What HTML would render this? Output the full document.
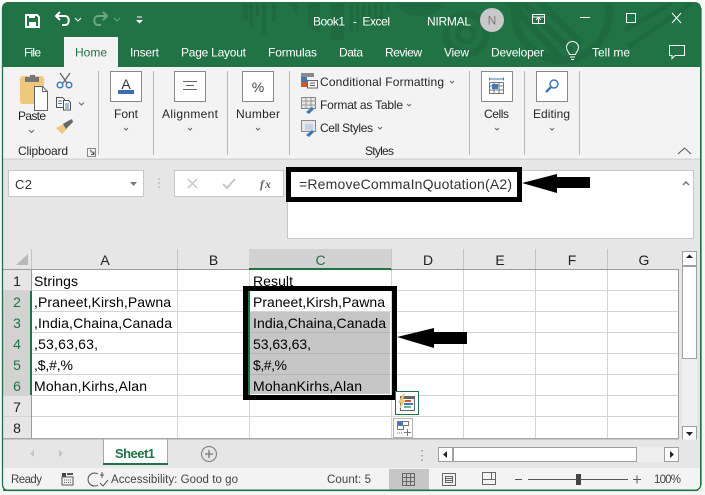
<!DOCTYPE html>
<html><head><meta charset="utf-8"><style>
html,body{margin:0;padding:0;background:#fff;width:705px;height:495px;overflow:hidden}
svg{display:block}
text{font-family:"Liberation Sans",sans-serif;font-size:12px;fill:#262626}
.w text,text.w{fill:#fff}
.c text{font-size:14px;fill:#000}
.h text{font-size:14px;fill:#222;text-anchor:middle}
.hg text,text.hg{fill:#217346}
.g{stroke:#d4d4d4;stroke-width:1;fill:none}
.i{fill:none;stroke:#666;stroke-width:1}
</style></head><body>
<svg width="705" height="495" viewBox="0 0 705 495" xmlns="http://www.w3.org/2000/svg">
<rect width="705" height="495" fill="#f6f6f6"/>
<rect x="0" y="0" width="705" height="2" fill="#fff"/>
<!-- window -->
<rect x="2" y="2" width="699" height="488.500" rx="6" fill="#217346"/>
<rect x="3" y="67" width="697" height="422.500" rx="5" fill="#f3f3f3"/>
<rect x="3" y="67" width="697" height="10" fill="#f3f3f3"/>
<!-- title decoration -->
<clipPath id="tb"><rect x="3" y="3" width="697" height="64"/></clipPath>
<g clip-path="url(#tb)">
<g fill="#1f6a41">
<rect x="243" y="3" width="5" height="17"/><rect x="249" y="3" width="4" height="23"/><rect x="256" y="3" width="3" height="13"/><rect x="262" y="3" width="4" height="32"/><rect x="272" y="3" width="4" height="19"/>
<path d="M290 3h8v13zM308 3h12v30l-12-6zM331 3h13v37h-13z"/>
<path d="M350 3h3v30h-3zM356 3h3v28h-3zM362 3h3v26h-3zM368 3h3v24h-3zM374 3h3v20h-3zM380 3h3v16h-3zM386 3h3v10h-3z"/>
<path d="M398 3h44q-4 13-22 13t-22-13z"/>
</g>
<g fill="none" stroke="#1f6a41">
<circle cx="466" cy="34" r="20" stroke-width="7"/>
<circle cx="466" cy="34" r="8" stroke-width="5"/>
<circle cx="562" cy="13" r="47" stroke-width="8"/>
<path d="M508 0l52 58M520 0l52 52M538 0l44 44" stroke-width="7"/>
<path d="M628 47l64-44M625 30l47-27" stroke-width="5"/>
</g>
</g>
<!-- QAT -->
<g fill="none" stroke="#fff">
<path d="M26 15h11l2 2v10H26z" stroke-width="2"/>
<rect x="29" y="14" width="6" height="4" fill="#fff" stroke="none"/><rect x="29" y="22" width="7" height="6" fill="#fff" stroke="none"/>
<path d="M56 16h9c5 0 5 9 0 9h-3M60 12l-4 4 4 4" stroke-width="2"/>
<path d="M75 18l3 3 3-3" stroke-width="1"/>
<g opacity=".35"><path d="M107 16h-9c-5 0-5 9 0 9h3M103 12l4 4-4 4" stroke-width="2"/><path d="M114 18l3 3 3-3"/></g>
<path d="M137 17h5" stroke-width="1"/></g>
<path d="M136 20h7l-3.500 3.500z" fill="#fff"/>
<g class="w">
<text x="313" y="25.500" textLength="32">Book1</text>
<text x="353" y="25.500" textLength="37" xml:space="preserve">-  Excel</text>
<text x="427" y="25.500" textLength="44">NIRMAL</text>
<text x="24" y="56.500" textLength="17">File</text>
<text x="130" y="56.500" textLength="29">Insert</text>
<text x="181" y="56.500" textLength="65">Page Layout</text>
<text x="268" y="56.500" textLength="49">Formulas</text>
<text x="339" y="56.500" textLength="24">Data</text>
<text x="385" y="56.500" textLength="37">Review</text>
<text x="444" y="56.500" textLength="25">View</text>
<text x="491" y="56.500" textLength="53">Developer</text>
<text x="592" y="56.500" textLength="38">Tell me</text>
</g>
<circle cx="492" cy="20" r="12" fill="#c9c9c9"/>
<text x="492" y="24.500" text-anchor="middle" style="fill:#7a7a7a">N</text>
<g fill="none" stroke="#fff">
<rect x="532.500" y="14.500" width="12" height="9"/><path d="M532 17h13M538.500 23v-5M536 20l2.500-2.500 2.500 2.500"/>
<path d="M580 17.500h10"/>
<rect x="626.500" y="13.500" width="9" height="9"/>
<path d="M672 13l9 10M681 13l-9 10"/>
<path d="M569.500 54.500c-1-3-3-4-3-7a6 6 0 0 1 12 0c0 3-2 4-3 7zM570 57h5M571 59.500h3" stroke-width="1"/>
<path d="M669.500 45.500h15v10H675l-3 3v-3h-2.500z" stroke-width="1"/>
</g>
<!-- Home tab -->
<rect x="64" y="37" width="54" height="31" fill="#f3f3f3"/>
<text x="75" y="56.500" textLength="32" class="hg">Home</text>
<!-- Ribbon separators -->
<g stroke="#b8b8b8"><path d="M98.500 71v84M153.500 71v84M227.500 71v84M289.500 71v84M469.500 71v84M524.500 71v84M579.500 71v84"/></g>
<rect x="3" y="158.500" width="697" height="1.500" fill="#d6d6d6"/>
<!-- Paste -->
<path d="M20 79q0-3 3-3h18q3 0 3 3v22q0 3-3 3H23q-3 0-3-3z" fill="#f0c87c"/>
<rect x="25" y="77" width="14" height="5" fill="#777"/><rect x="30" y="75" width="5" height="4" fill="#777"/>
<path d="M34.500 86.500h8l5 5v19h-13z" fill="#fff" stroke="#666"/>
<path d="M42.500 86.500v5h5" fill="none" stroke="#666"/>
<g fill="none" stroke="#666" stroke-width="1.300"><path d="M60 73l7 10M70 73l-7 10"/></g>
<circle cx="60" cy="85" r="2.800" fill="none" stroke="#3e7ab5" stroke-width="1.500"/><circle cx="69" cy="85" r="2.800" fill="none" stroke="#3e7ab5" stroke-width="1.500"/>
<path d="M56.500 97.500h6l2 2v8h-8z" fill="#fff" stroke="#555"/><path d="M63.500 100.500h5l2 2v7.500h-7z" fill="#fff" stroke="#555"/>
<path d="M58 101h4M58 103.500h4M65 104h4M65 106h4M65 108h4" stroke="#3e7ab5"/>
<path d="M79 102.500l2.500 2.500 2.500-2.500M29 130l2.500 2.500 2.500-2.500" fill="none" stroke="#666"/>
<path d="M56 128l8-4 3 5-5 5z" fill="#f0c87c"/><path d="M63 124l5-3 4-2 1 3-3 3-4 4z" fill="#666"/>
<text x="18" y="120" textLength="28">Paste</text>
<text x="18" y="155" textLength="50">Clipboard</text>
<path d="M87.500 148.500h8v8h-8z" fill="none" stroke="#888"/><path d="M90 150l4 4M94 151.500v3h-3" fill="none" stroke="#555"/>
<!-- ribbon boxes -->
<g fill="#fff" stroke="#8a8a8a">
<rect x="110.500" y="71.500" width="31" height="30"/><rect x="174.500" y="71.500" width="31" height="30"/><rect x="242.500" y="71.500" width="31" height="30"/><rect x="481.500" y="71.500" width="31" height="30"/><rect x="536.500" y="71.500" width="31" height="30"/>
</g>
<text x="126" y="89" text-anchor="middle" style="font-size:14px;fill:#333">A</text>
<rect x="118" y="90" width="16" height="4" fill="#3c6eaf"/>
<path d="M183 81.500h14M186 85.500h8M183 89.500h14" stroke="#666" fill="none"/>
<text x="258" y="92" text-anchor="middle" style="font-size:14px;fill:#444">%</text>
<g fill="none" stroke="#777"><rect x="489.500" y="82.500" width="14" height="11"/><path d="M494 83v10M499 83v10M489 86h15M489 90h15"/></g>
<path d="M489.500 79h14M489.500 77.500v3M503.500 77.500v3" stroke="#3e7ab5" fill="none"/><rect x="492" y="84" width="6" height="5" fill="#3e7ab5"/>
<circle cx="554" cy="84" r="4" fill="none" stroke="#3e7ab5" stroke-width="1.500"/><path d="M551 87l-5 5" stroke="#3e7ab5" stroke-width="2.500"/>
<text x="114" y="118" textLength="24">Font</text>
<text x="162" y="118" textLength="56">Alignment</text>
<text x="236" y="118" textLength="44">Number</text>
<text x="484" y="118" textLength="25">Cells</text>
<text x="533" y="118" textLength="37">Editing</text>
<g fill="none" stroke="#666"><path d="M124 128l2 2 2-2M188 128l2 2 2-2M256 128l2 2 2-2M495 128l2 2 2-2M550 128l2 2 2-2M450 81l2 2 2-2M407 104l2 2 2-2M378 127l2 2 2-2"/></g>
<!-- styles -->
<rect x="301" y="73" width="13" height="4" fill="#8a8a8a"/><rect x="301" y="77" width="6" height="5" fill="#3e7ab5"/><rect x="301" y="82" width="6" height="5" fill="#d9552c"/>
<rect x="307.500" y="80.500" width="10" height="7.500" fill="#fff" stroke="#666"/><path d="M310 83h5M310 85.500h5" stroke="#555"/>
<g fill="#e6e6e6" stroke="#888"><rect x="301.500" y="97.500" width="14" height="11"/><rect x="301.500" y="120.500" width="14" height="11"/></g>
<path d="M306 98v10M311 98v10M301 101h15M301 105h15" stroke="#999"/>
<rect x="305" y="124" width="8" height="6" fill="#c4d2e4"/>
<path d="M306 112l6-5 2 2-5 5zM306 135l6-5 2 2-5 5z" fill="#3e7ab5"/>
<text x="320" y="86" textLength="124">Conditional Formatting</text>
<text x="320" y="109" textLength="83">Format as Table</text>
<text x="320" y="132" textLength="53">Cell Styles</text>
<text x="365" y="155" textLength="29">Styles</text>
<path d="M678 154l6.500-6 6.500 6" fill="none" stroke="#555"/>
<!-- formula region -->
<rect x="3" y="160" width="697" height="308" fill="#e6e6e6"/>
<rect x="8.500" y="170.500" width="135" height="26" fill="#fff" stroke="#c6c6c6"/>
<text x="15" y="189" textLength="17" style="font-size:13px;fill:#333">C2</text>
<path d="M130 182h7l-3.500 4z" fill="#777"/>
<path d="M159 178.500v1M159 182.500v1M159 186.500v1" stroke="#aaa" stroke-width="2"/>
<rect x="174.500" y="170.500" width="109" height="26" fill="#fff" stroke="#c6c6c6"/>
<path d="M188 179l9 9M197 179l-9 9" stroke="#c6c6c6" stroke-width="1.500" fill="none"/>
<path d="M223 184l4 4 8-9" stroke="#c6c6c6" stroke-width="2" fill="none"/>
<text x="260" y="188" style="font-family:'Liberation Serif',serif;font-style:italic;font-weight:bold;font-size:12px;fill:#666" textLength="11">fx</text>
<rect x="287.500" y="170.500" width="406" height="68" fill="#fff" stroke="#c6c6c6"/>
<path d="M683 185l3-3 3 3" fill="none" stroke="#777" stroke-width="1.500"/>
<text x="299" y="189" textLength="213" style="font-size:14px;fill:#333">=RemoveCommaInQuotation(A2)</text>
<rect x="288.500" y="169.500" width="231" height="30" fill="none" stroke="#000" stroke-width="5"/>
<path d="M522 183l35-9v3h33v11h-33v5z" fill="#000"/>
<!-- grid -->
<rect x="3" y="249" width="676" height="20" fill="#e6e6e6"/>
<rect x="32" y="270" width="646" height="168" fill="#fff"/>
<rect x="3" y="270" width="28" height="168" fill="#e6e6e6"/>
<rect x="3" y="291" width="28" height="104" fill="#d2d2d2"/>
<rect x="249" y="249" width="143" height="20" fill="#d2d2d2"/>
<rect x="249" y="268" width="143" height="2" fill="#217346"/>
<path d="M28 265v-11l-12 11z" fill="#b9b9b9"/>
<g stroke="#c4c4c4"><path d="M31.500 249v20M177.500 249v20M463.500 249v20M535.500 249v20M607.500 249v20M391.500 249v20"/></g>
<rect x="3" y="269" width="246" height="1" fill="#9b9b9b"/><rect x="392" y="269" width="286" height="1" fill="#9b9b9b"/>
<rect x="31" y="269" width="1" height="169" fill="#9b9b9b"/>
<path class="g" d="M32 290.500h646M32 311.500h646M32 332.500h646M32 353.500h646M32 374.500h646M32 395.500h646M32 416.500h646M3 290.500h28M3 311.500h28M3 332.500h28M3 353.500h28M3 374.500h28M3 395.500h28M3 416.500h28M177.500 270v168M249.500 270v168M391.500 270v168M463.500 270v168M535.500 270v168M607.500 270v168"/>
<rect x="678" y="269" width="1" height="170" fill="#9b9b9b"/>
<rect x="30" y="291" width="2" height="104" fill="#217346"/>
<rect x="250" y="312" width="140" height="82" fill="#c6c6c6"/>
<path d="M250 332.500h140M250 353.500h140M250 374.500h140" stroke="#b4b4b4"/>
<rect x="248" y="291" width="2" height="104" fill="#217346"/>
<g class="h">
<text x="105" y="265">A</text><text x="213.500" y="265">B</text><text x="320.500" y="265" class="hg">C</text><text x="428" y="265">D</text><text x="500" y="265">E</text><text x="572" y="265">F</text><text x="644" y="265">G</text>
<text x="17" y="286">1</text><text x="17" y="307" class="hg">2</text><text x="17" y="328" class="hg">3</text><text x="17" y="349" class="hg">4</text><text x="17" y="370" class="hg">5</text><text x="17" y="391" class="hg">6</text><text x="17" y="412">7</text><text x="17" y="433">8</text>
</g>
<g class="c">
<text x="34" y="286" textLength="44">Strings</text>
<text x="34" y="307" textLength="137">,Praneet,Kirsh,Pawna</text>
<text x="34" y="328" textLength="138">,India,Chaina,Canada</text>
<text x="34" y="349" textLength="64">,53,63,63,</text>
<text x="34" y="370" textLength="39">,$,#,%</text>
<text x="34" y="391" textLength="113">Mohan,Kirhs,Alan</text>
<text x="253" y="286" textLength="40">Result</text>
<text x="253" y="307" textLength="132">Praneet,Kirsh,Pawna</text>
<text x="253" y="328" textLength="133">India,Chaina,Canada</text>
<text x="253" y="349" textLength="58">53,63,63,</text>
<text x="253" y="370" textLength="34">$,#,%</text>
<text x="253" y="391" textLength="109">MohanKirhs,Alan</text>
</g>
<rect x="245.500" y="288.500" width="149" height="109" fill="none" stroke="#000" stroke-width="5"/>
<path d="M397 337l37-9v4h33v12h-33v4z" fill="#000"/>
<!-- flash fill -->
<rect x="395.500" y="391.500" width="23" height="23" fill="#fff" stroke="#217346"/>
<rect x="400.500" y="396.500" width="14" height="14" fill="#fff" stroke="#666"/>
<rect x="401" y="396" width="13" height="3" fill="#666"/>
<path d="M403 394l-5 9h3l-2 7 7-10h-3l2-6z" fill="#f0c87c"/>
<rect x="405" y="400" width="6" height="2" fill="#d9552c"/><rect x="404" y="403" width="9" height="2" fill="#3e7ab5"/><rect x="404" y="406" width="7" height="2" fill="#6fb3a0"/>
<rect x="393.500" y="418.500" width="19" height="19" fill="#fff" stroke="#b5b5b5"/>
<rect x="397" y="422" width="6" height="4" fill="#2f7de1"/><path d="M397.500 421.500h11v4h-11zM397.500 425.500h6v4h-6z" fill="none" stroke="#777"/>
<path d="M397 433h6" stroke="#777" stroke-dasharray="1 1"/><path d="M407.500 429v7M404 432.500h7" stroke="#777"/>
<!-- v scrollbar -->
<rect x="682" y="251" width="15" height="190" fill="#efefef"/>
<rect x="682.500" y="251.500" width="14" height="14" fill="#fff" stroke="#a0a0a0"/>
<path d="M686 258h7l-3.500-3.500z" fill="#222"/>
<rect x="682.500" y="266.500" width="14" height="92" fill="#fff" stroke="#a0a0a0"/>
<rect x="682.500" y="426.500" width="14" height="14" fill="#fff" stroke="#a0a0a0"/>
<path d="M686 432h7l-3.500 4z" fill="#222"/>
<!-- tab bar -->
<rect x="3" y="438" width="676" height="1.500" fill="#a8a8a8"/>
<rect x="3" y="439.500" width="697" height="28.500" fill="#e6e6e6"/>
<path d="M30 453.500l4-3.500v7zM59 450v7l4-3.500z" fill="#c4c4c4"/>
<rect x="103.500" y="439" width="64" height="25" fill="#fff" stroke="#a8a8a8"/>
<rect x="103" y="463" width="65" height="2" fill="#217346"/>
<text x="115" y="458" textLength="40" class="hg" style="font-weight:bold;font-size:13px">Sheet1</text>
<circle cx="209" cy="454" r="7.500" fill="none" stroke="#8a8a8a" stroke-width="1.200"/><path d="M205 454h8M209 450v8" stroke="#777" stroke-width="1.300"/>
<path d="M422 450v1.500M422 455v1.500M422 459.500v1.500" stroke="#aaa" stroke-width="2"/>
<rect x="453" y="447" width="225" height="15" fill="#efefef"/>
<rect x="438.500" y="447.500" width="14" height="14" fill="#fff" stroke="#a0a0a0"/>
<path d="M447 451v7l-4-3.500z" fill="#222"/>
<rect x="453.500" y="447.500" width="183" height="14" fill="#fff" stroke="#a0a0a0"/>
<rect x="664.500" y="447.500" width="14" height="14" fill="#fff" stroke="#a0a0a0"/>
<path d="M670 451v7l4-3.500z" fill="#222"/>
<!-- status bar -->
<rect x="3" y="468" width="697" height="21.500" fill="#f3f3f3"/>
<rect x="3" y="489.500" width="695" height="1.500" fill="#217346"/>
<text x="11" y="483" textLength="31" style="font-size:11.500px;fill:#444">Ready</text>
<rect x="62" y="473" width="4" height="4" fill="#444"/><rect x="62" y="477" width="11" height="8" fill="none" stroke="#555"/><rect x="67" y="473" width="6" height="2" fill="#555"/>
<path d="M64 480h7M64 482.500h7" stroke="#555" stroke-dasharray="1 1"/>
<path d="M98 474a6.500 6.500 0 1 0 0 11M102 472v6M100 475h4M100 483l3 3 5-6" fill="none" stroke="#555"/>
<text x="111" y="483" textLength="127" style="font-size:11.500px;fill:#444">Accessibility: Good to go</text>
<text x="327" y="483" textLength="44" style="font-size:11.500px;fill:#444">Count: 5</text>
<rect x="389" y="469" width="40" height="20.500" fill="#c6c6c6"/>
<path d="M402.500 473.500h12v12h-12zM406.500 474v12M410.500 474v12M402 477.500h13M402 481.500h13" fill="none" stroke="#666"/>
<path d="M442.500 473.500h13v12h-13zM445.500 476.500h7v6h-7zM446 478.500h6M446 480.500h6" fill="none" stroke="#666"/>
<path d="M482.500 472.500h13v12h-13zM482.500 479.500h13M491.500 472.500v7" fill="none" stroke="#666"/>
<path d="M515 479.500h7M528 479.500h100" stroke="#555" fill="none"/>
<rect x="576" y="474" width="5" height="11" fill="#444"/>
<path d="M633 479.500h8M637 475.500v8" stroke="#555" fill="none"/>
<text x="654" y="483" textLength="27" style="font-size:11.500px;fill:#444">100%</text>
<!-- window borders -->
<path d="M2.500 8v476q0 6 6 6.500h686q6-.500 6.500-6.500V8" fill="none" stroke="#217346" stroke-width="1.300"/>
</svg>
</body></html>
